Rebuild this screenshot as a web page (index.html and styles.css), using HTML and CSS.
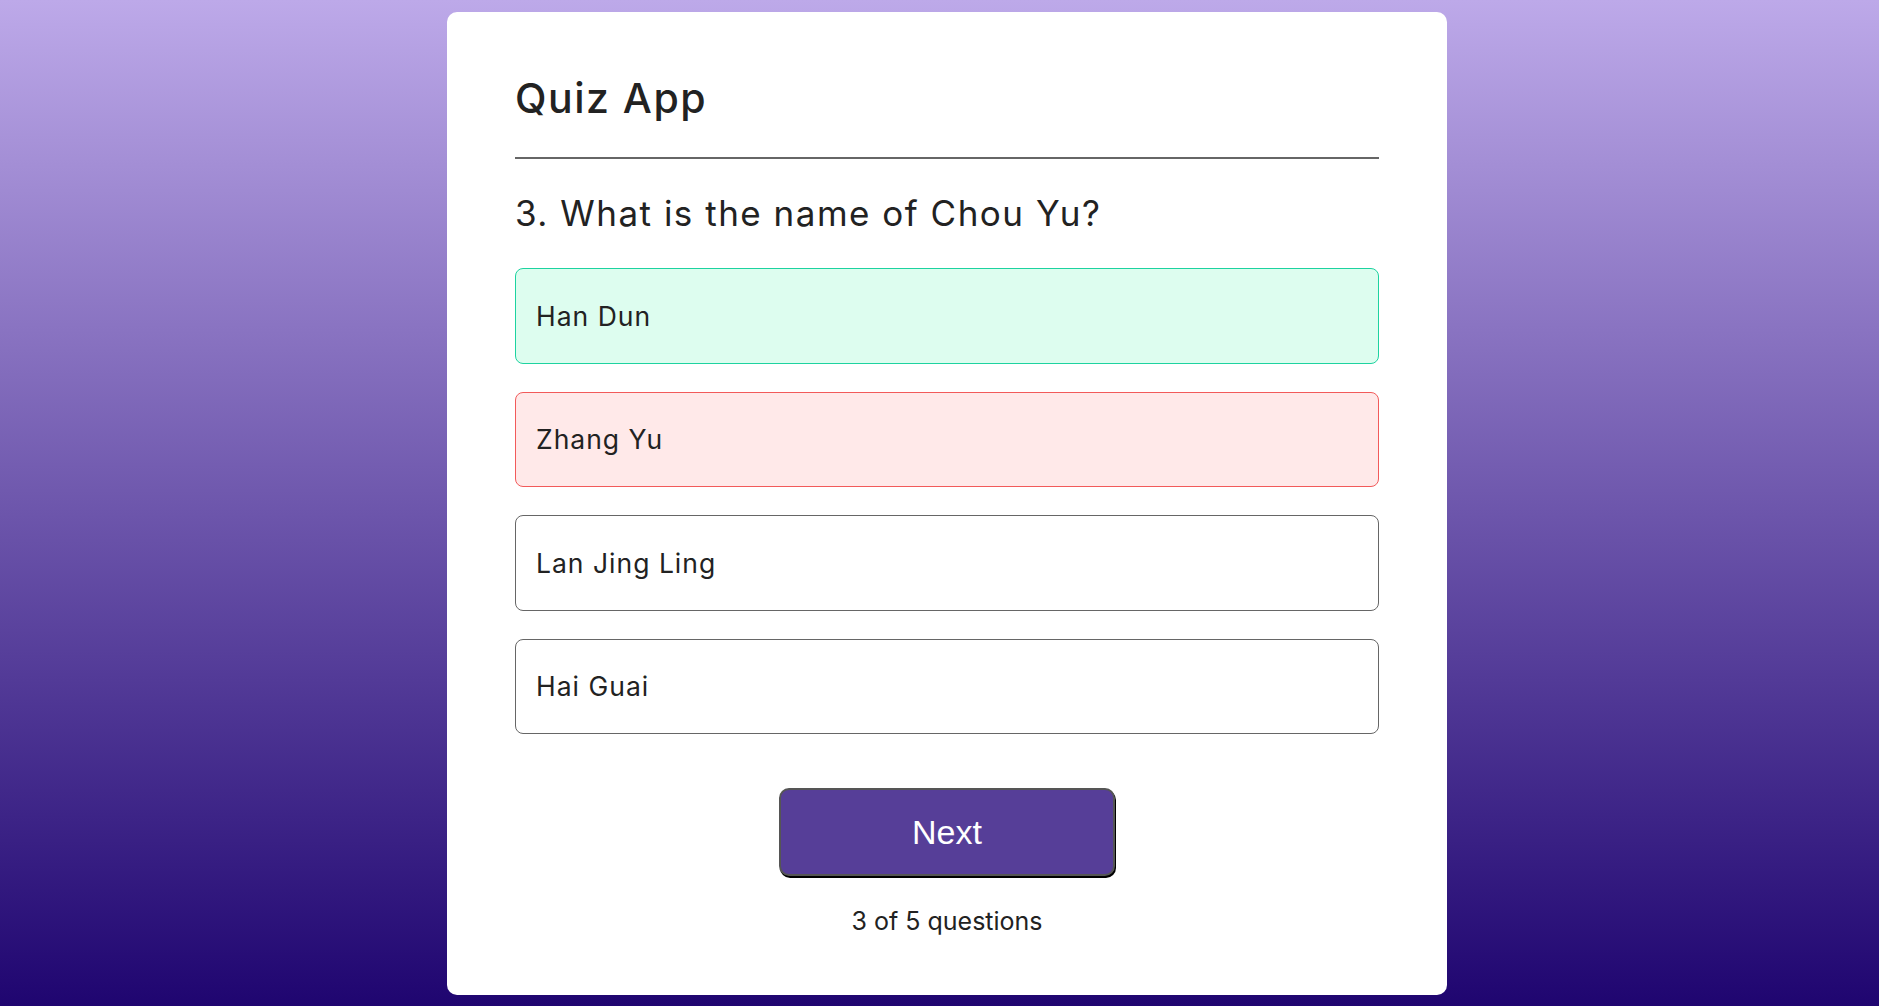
FILE: index.html
```html
<!DOCTYPE html>
<html lang="en">
<head>
<meta charset="utf-8">
<title>Quiz App</title>
<link rel="stylesheet" href="styles.css">
</head>
<body>
<main class="page">
  <section class="card">
    <h1 class="title">Quiz App</h1>
    <hr class="divider">
    <h2 class="question">3. What is the name of Chou Yu?</h2>
    <ul class="options">
      <li class="option correct">Han Dun</li>
      <li class="option wrong">Zhang Yu</li>
      <li class="option">Lan Jing Ling</li>
      <li class="option">Hai Guai</li>
    </ul>
    <div class="actions">
      <button class="next-btn" type="button">Next</button>
    </div>
    <p class="counter">3 of 5 questions</p>
  </section>
</main>
</body>
</html>
```
FILE: styles.css
```css
html, body {
  margin: 0;
  padding: 0;
  height: 100%;
}
body {
  background: linear-gradient(to bottom, #bda9e9 0%, #1f0570 100%);
  font-family: Inter, "Open Sans", sans-serif;
  color: #222;
}
.page {
  display: flex;
  justify-content: center;
  padding: 12px 0 0 15px;
  box-sizing: border-box;
  min-height: 100%;
}
.card {
  width: 1000px;
  height: 983px;
  box-sizing: border-box;
  background: #fff;
  border-radius: 10px;
  padding: 56px 68px 0 68px;
}
.title {
  margin: 0;
  font-size: 41px;
  line-height: 60px;
  font-weight: 500;
  letter-spacing: 1.5px;
  color: #222;
}
.divider {
  margin: 29px 0 0 0;
  border: 0;
  height: 2px;
  background: #666;
}
.question {
  margin: 29px 0 0 0;
  font-size: 35px;
  line-height: 50px;
  font-weight: 400;
  letter-spacing: 1.5px;
  color: #222;
}
.options {
  list-style: none;
  margin: 30px 0 0 0;
  padding: 0;
  display: flex;
  flex-direction: column;
  gap: 28px;
}
.option {
  height: 95.5px;
  box-sizing: border-box;
  border: 1px solid #666;
  border-radius: 8px;
  display: flex;
  align-items: center;
  padding: 0 20px;
  font-size: 26.5px;
  letter-spacing: 1px;
  color: #222;
}
.option.correct {
  background: #ddfdef;
  border-color: #1dd3a0;
}
.option.wrong {
  background: #ffe9e9;
  border-color: #f25a5a;
}
.actions {
  display: flex;
  justify-content: center;
  margin-top: 54px;
}
.next-btn {
  width: 336px;
  height: 88px;
  box-sizing: border-box;
  background: #563e98;
  border: 2px solid #555;
  border-radius: 10px;
  box-shadow: 1px 2px 0 #000;
  color: #fff;
  font-family: "Liberation Sans", Arial, sans-serif;
  font-size: 34px;
  padding: 0;
}
.counter {
  margin: 27px 0 0 0;
  text-align: center;
  font-size: 25px;
  line-height: 36px;
  color: #222;
}
```
